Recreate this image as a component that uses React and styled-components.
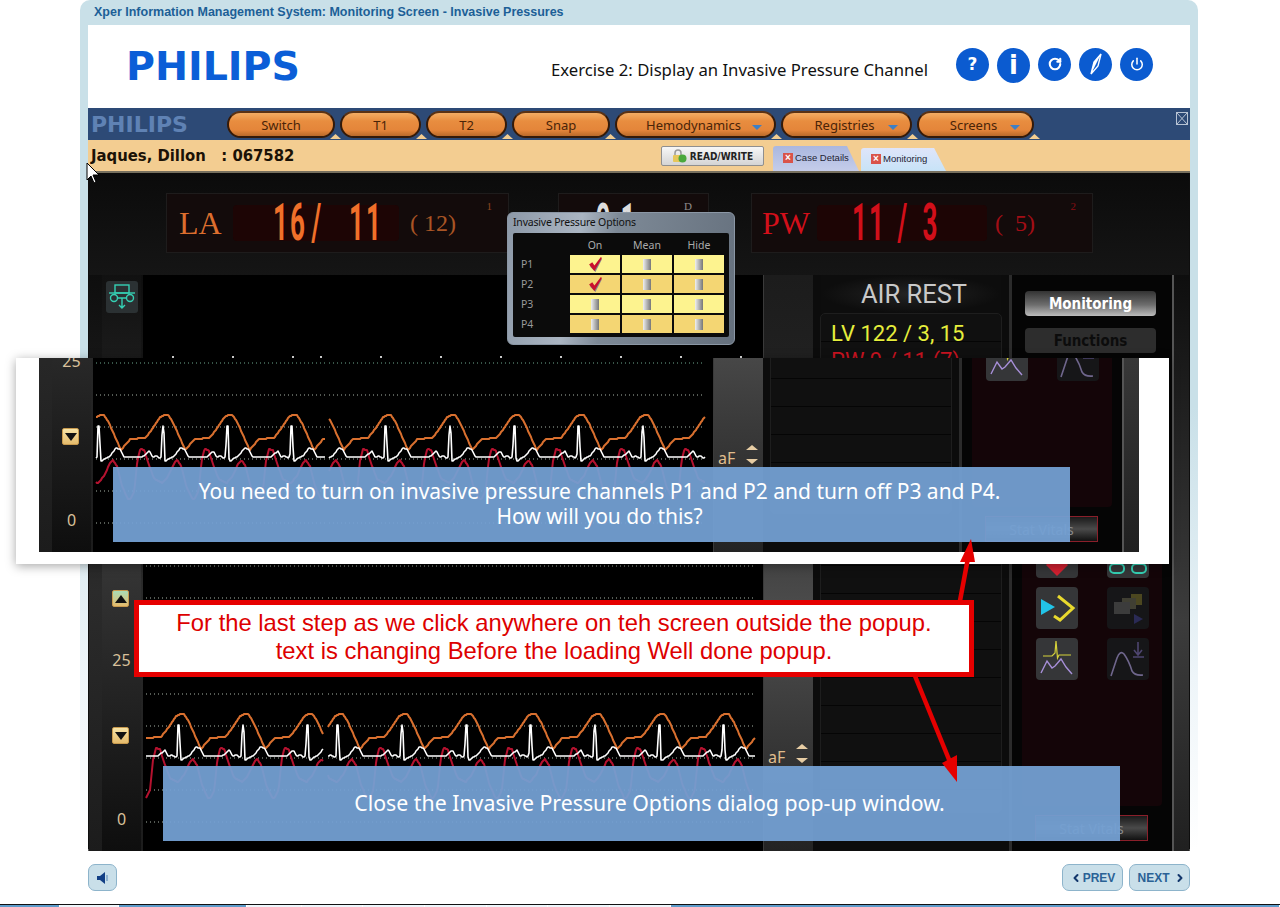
import React from 'react';
import styled, { createGlobalStyle } from 'styled-components';
import { ChevronLeft, ChevronRight, Power, RotateCw } from 'lucide-react';

const GlobalStyle = createGlobalStyle`
  html, body { margin: 0; padding: 0; background: #fff; }
  body { font-family: "Liberation Sans", Arial, sans-serif; }
  * { box-sizing: border-box; }
`;

const CHART_TOP = 275;
const CHART_LEFT = 143;
const PERIOD = 64.3;

// waveform shapes, keyed on distance from the R peak
const ORANGE = [[-32, 738], [-17, 737], [-10, 728], [-2, 716], [2, 714], [6, 714], [11, 722], [23, 749], [32.3, 738]];
const WHITE = [[-32, 756], [-20, 756], [-13, 750], [-10, 756], [-6, 755], [-3, 757], [-1, 756], [0, 725], [1.5, 725], [2.5, 760], [4, 760], [6, 758], [12, 755], [18, 747], [22, 748], [26, 756], [32.3, 756]];
const RED = [[-32, 798], [-28, 790], [-25, 760], [-22, 748], [-18, 749], [-14, 762], [-8, 778], [0, 782], [6, 775], [12, 762], [15, 759], [19, 765], [24, 785], [30, 798], [32.3, 798]];

const sampleWave = (shape, t) => {
  for (let i = 0; i < shape.length - 1; i++) {
    const [t0, y0] = shape[i];
    const [t1, y1] = shape[i + 1];
    if (t >= t0 && t <= t1) return y0 + ((y1 - y0) * (t - t0)) / (t1 - t0);
  }
  return shape[0][1];
};

const wavePoints = (shape, { from, to, firstPeak }) => {
  const pts = [];
  for (let x = from; x <= to; x++) {
    let t = (x - firstPeak) % PERIOD;
    if (t > 32.15) t -= PERIOD;
    if (t < -32.15) t += PERIOD;
    pts.push(`${x - CHART_LEFT},${Math.round(sampleWave(shape, t)) - CHART_TOP}`);
  }
  return pts.join(' ');
};

const MAIN_TRACES = [
  { from: 146, to: 323, firstPeak: 178 },
  { from: 328, to: 755, firstPeak: 337 },
];
const ZOOMED_TRACES = [
  { from: 146, to: 375, firstPeak: 148 },
  { from: 379, to: 755, firstPeak: 435 },
];
const GRID_ROWS = [566, 598, 630, 662, 694, 726, 758, 790, 822];
const TICKS = [172, 232, 292, 320, 380, 440, 500, 560, 620, 680, 740];

const Page = styled.div`
  position: relative;
  width: 1280px;
  height: 907px;
  overflow: hidden;
  background: #fff;
`;

const Shell = styled.div`
  width: 1118px;
  height: 904px;
  margin-left: 80px;
  padding: 0 8px;
  border-radius: 10px 10px 0 0;
  background: linear-gradient(#c9e0e8 0, #c9e0e8 45%, #eef5f9 75%, #fff 94%);
`;

const TitleBar = styled.div`
  height: 25px;
  padding: 5px 0 0 6px;
  font: bold 12.5px "Liberation Sans", Arial, sans-serif;
  color: #1c5f97;
`;

const Header = styled.div`
  display: flex;
  align-items: center;
  height: 83px;
  padding: 0 37px 0 38px;
  background: #fff;
`;

const Logo = styled.div`
  font: bold 39.5px "DejaVu Sans", sans-serif;
  color: #0b5ed7;
  line-height: 1;
`;

const ExerciseTitle = styled.div`
  margin-left: auto;
  margin-right: 28px;
  margin-top: 6px;
  font: 16.7px "Noto Sans", sans-serif;
  color: #111;
`;

const RoundButtons = styled.div`
  display: flex;
  gap: 8px;
  margin-top: -3px;
`;

const RoundButton = styled.div`
  display: flex;
  align-items: center;
  justify-content: center;
  width: 33px;
  height: ${(props) => (props.$tall ? 35 : 33)}px;
  border-radius: 50%;
  background: #0b5bd0;
  color: #fff;
  font: bold ${(props) => (props.$tall ? 26 : 17)}px "DejaVu Sans", sans-serif;
`;

const NavBar = styled.div`
  display: flex;
  align-items: center;
  position: relative;
  height: 32px;
  background: #2d4a76;
`;

const NavBrand = styled.div`
  width: 139px;
  padding-left: 3px;
  font: bold 22px "DejaVu Sans", sans-serif;
  color: #5f82b4;
`;

const NavPills = styled.div`
  display: flex;
  gap: 5px;
  margin-top: 1px;
`;

const NavPill = styled.div`
  position: relative;
  display: flex;
  align-items: center;
  justify-content: center;
  width: ${(props) => props.$width}px;
  height: 27px;
  padding-right: ${(props) => (props.$menu ? 4 : 0)}px;
  border: 2px solid #351a08;
  border-top-color: #5a3214;
  border-radius: 14px;
  background: linear-gradient(#f3ad64 0, #e88d3f 35%, #e4853a 75%, #b96a2a 100%);
  font: 13px "Noto Sans", sans-serif;
  color: #4a2408;
  &::after {
    content: '';
    position: absolute;
    right: -8px;
    bottom: -3px;
    width: 11px;
    height: 5px;
    background: #f3cd91;
    clip-path: polygon(50% 0, 100% 100%, 0 100%);
  }
`;

const NavArrow = styled.span`
  position: absolute;
  right: 12px;
  top: 12px;
  width: 0;
  height: 0;
  border-left: 5px solid transparent;
  border-right: 5px solid transparent;
  border-top: 5px solid #3f7fc4;
`;

const WindowClose = styled.div`
  position: absolute;
  right: 2px;
  top: 4px;
  display: flex;
  color: #b7c3d4;
`;

const PatientBar = styled.div`
  display: flex;
  align-items: flex-end;
  height: 33px;
  padding: 0 0 0 3px;
  background: #f3cd91;
  border-bottom: 2px solid #77705f;
`;

const PatientName = styled.div`
  width: 570px;
  margin-bottom: 6px;
  font: bold 16.5px "DejaVu Sans Condensed", "DejaVu Sans", sans-serif;
  white-space: pre;
  color: #1b1206;
`;

const ReadWrite = styled.div`
  display: flex;
  align-items: center;
  justify-content: center;
  gap: 3px;
  width: 103px;
  height: 20px;
  margin-bottom: 5px;
  border: 1px solid #8f8f8f;
  border-radius: 2px;
  background: linear-gradient(#f7f7f7, #d4d4d4);
  font: bold 10px "DejaVu Sans Condensed", "DejaVu Sans", sans-serif;
  color: #222;
`;

const Tab = styled.div`
  display: flex;
  align-items: center;
  gap: 2px;
  width: ${(props) => props.$width}px;
  height: ${(props) => props.$height}px;
  margin-left: ${(props) => props.$gap}px;
  padding: 0 0 2px 10px;
  border-radius: 3px 6px 0 0;
  clip-path: polygon(0 0, 86% 0, 100% 100%, 0 100%);
  background: ${(props) => props.$background};
  font: 9.5px "Liberation Sans", sans-serif;
  color: #223;
`;

const TabClose = styled.span`
  display: flex;
  align-items: center;
  justify-content: center;
  width: 10px;
  height: 10px;
  background: #d9534a;
  color: #fff;
  font: bold 10px "Liberation Sans", sans-serif;
`;

const Monitor = styled.div`
  height: 678px;
  padding: 0 1px;
  background: #0e0e0e;
  border-bottom: 2px solid #555;
`;

const VitalsRow = styled.div`
  display: flex;
  height: 102px;
  padding: 20px 0 0 77px;
  background: linear-gradient(#0b0b0b, #151515);
`;

const VitalPanel = styled.div`
  position: relative;
  display: flex;
  align-items: center;
  width: ${(props) => props.$width}px;
  height: 60px;
  margin-right: ${(props) => props.$gap || 0}px;
  padding-left: ${(props) => props.$pad}px;
  background: #130b0b;
  border: 1px solid #1e1c1c;
  color: ${(props) => props.$color};
`;

const VitalLabel = styled.div`
  width: ${(props) => props.$width}px;
  font: 32px "Liberation Serif", serif;
`;

const DigitStrip = styled.div`
  display: flex;
  align-items: center;
  width: ${(props) => props.$width}px;
  height: 36px;
  padding-left: ${(props) => props.$pad}px;
  border-radius: 4px;
  background: #1d0505;
`;

const Digits = styled.span`
  display: inline-block;
  width: ${(props) => props.$width}px;
  margin-right: ${(props) => props.$gap || 0}px;
  text-align: center;
  font: 700 52px Roboto, sans-serif;
  line-height: 36px;
  letter-spacing: 4px;
  white-space: nowrap;
  transform: scaleX(0.5);
  color: ${(props) => props.$color || 'inherit'};
`;

const VitalMean = styled.div`
  margin-left: ${(props) => props.$gap}px;
  font: 24px "Liberation Serif", serif;
  white-space: pre;
  opacity: 0.75;
`;

const VitalIndex = styled.span`
  position: absolute;
  right: 16px;
  top: 6px;
  font: 11px "Liberation Serif", serif;
  opacity: 0.6;
`;

const Deck = styled.div`
  display: flex;
  width: 1100px;
  height: 576px;
  background: #000;
  margin-top: ${(props) => props.$offset || 0}px;
`;

const Rail = styled.div`
  position: relative;
  display: flex;
  flex-direction: column;
  align-items: center;
  width: 54px;
  border-left: 13px solid;
  border-image: linear-gradient(#0e0e0e, #2b2b2b 55%, #1c1c1c) 1;
  border-right: 2px solid #4c4c4c;
  background: linear-gradient(#111 0, #1b1b1b 15%, #353535 50%, #0e0e0e 100%);
`;

const RailIcon = styled.div`
  width: 32px;
  height: 32px;
  margin-top: 6px;
  border-radius: 3px;
  background: #2b3133;
  display: flex;
`;

const ScaleButton = styled.div`
  position: absolute;
  left: 10px;
  top: ${(props) => props.$top}px;
  display: flex;
  align-items: center;
  justify-content: center;
  width: 17px;
  height: 17px;
  border-radius: 2px;
  background: linear-gradient(${(props) => props.$shade}, #e5bb6c);
  border: 1px solid #c89a4e;
`;

const ScaleTriangle = styled.span`
  width: 0;
  height: 0;
  border-left: 6px solid transparent;
  border-right: 6px solid transparent;
  ${(props) => (props.$up ? 'border-bottom: 8px solid #111;' : 'border-top: 8px solid #111;')}
`;

const ScaleValue = styled.span`
  position: absolute;
  left: 0;
  width: 39px;
  top: ${(props) => props.$top}px;
  text-align: center;
  font: 16px "Noto Sans", sans-serif;
  color: #d9c19b;
`;

const ChartPane = styled.div`
  width: 620px;
  background: #000;
  display: flex;
`;

const ScaleColumn = styled.div`
  position: relative;
  width: 50px;
  border-left: 1px solid #3a3a3a;
  background: linear-gradient(#1c1c1c 0, #222 20%, #4e4e4e 60%, #3d3d3d 75%, #232323 100%);
`;

const GainLabel = styled.span`
  position: absolute;
  left: 4px;
  top: 471px;
  font: 16px "Noto Sans", sans-serif;
  color: #e0bd8d;
`;

const GainArrows = styled.div`
  position: absolute;
  left: 32px;
  top: 469px;
  display: flex;
  flex-direction: column;
  gap: 9px;
`;

const GainArrow = styled.span`
  width: 0;
  height: 0;
  border-left: 6px solid transparent;
  border-right: 6px solid transparent;
  ${(props) => (props.$up ? 'border-bottom: 5px solid #e7cda4;' : 'border-top: 5px solid #e7cda4;')}
`;

const ReadoutColumn = styled.div`
  width: 199px;
  padding: 0 8px;
  border-right: 3px solid #2b2b2b;
  background: #0c0c0c;
`;

const ProcedureName = styled.div`
  height: 38px;
  padding-left: 6px;
  text-align: center;
  font: 25.5px/38px Roboto, sans-serif;
  color: #c9c9c9;
  background: radial-gradient(ellipse at center, #242424, #0d0d0d 70%);
  visibility: ${(props) => (props.$hidden ? 'hidden' : 'visible')};
`;

const ReadoutBox = styled.div`
  height: 500px;
  margin: 0 -1px;
  padding: 6px 10px;
  border: 1px solid #1e1e1e;
  border-radius: 5px;
  background: repeating-linear-gradient(#101010 0, #101010 27px, #050505 27px, #050505 28px);
`;

const ReadoutLine = styled.div`
  font: 22px/27px Roboto, sans-serif;
  color: ${(props) => props.$color};
  visibility: ${(props) => (props.$hidden ? 'hidden' : 'visible')};
`;

const ControlsColumn = styled.div`
  display: flex;
  flex-direction: column;
  width: 160px;
  padding: 16px 10px 0;
  background: #050505;
`;

const ModeButton = styled.div`
  display: flex;
  align-items: center;
  justify-content: center;
  height: 25px;
  margin: 0 6px 12px 3px;
  border-radius: 4px;
  font: bold 15px "DejaVu Sans Condensed", "DejaVu Sans", sans-serif;
  color: ${(props) => (props.$active ? '#fff' : '#0c0c0c')};
  background: ${(props) => (props.$active ? 'linear-gradient(#333, #6d6d6d 55%, #bcbcbc)' : '#2d2d2d')};
  visibility: ${(props) => (props.$hidden ? 'hidden' : 'visible')};
`;

const ToolPanel = styled.div`
  display: grid;
  grid-template-columns: 42px 42px;
  grid-auto-rows: 42px;
  justify-content: space-between;
  align-content: start;
  height: 447px;
  padding: 177px 13px 0 14px;
  margin-top: -6px;
  border-radius: 0 0 4px 4px;
  row-gap: 9px;
  background: #140508;
`;

const ToolTile = styled.div`
  display: flex;
  border-radius: 4px;
  background: ${(props) => (props.$dim ? '#161618' : '#353638')};
`;

const StatVitals = styled.div`
  display: flex;
  align-items: center;
  justify-content: center;
  width: 113px;
  height: 26px;
  margin: 9px 0 0 13px;
  border: 1px solid #8a1f2a;
  background: linear-gradient(#1a1a1a, #4a4a4a 50%, #111);
  font: 14px "Noto Sans", sans-serif;
  color: #8a8a8a;
`;

const EdgeColumn = styled.div`
  width: 17px;
  border-left: 2px solid #555;
  background: linear-gradient(#0e0e0e, #3c3c3c 60%, #202020);
`;

const Footer = styled.div`
  display: flex;
  align-items: flex-start;
  gap: 6px;
  height: 53px;
  padding-top: 13px;
`;

const FooterButton = styled.div`
  display: flex;
  align-items: center;
  justify-content: center;
  gap: ${(props) => props.$gap || 0}px;
  width: ${(props) => props.$width}px;
  height: 27px;
  margin-right: ${(props) => (props.$push ? 'auto' : 0)};
  padding-left: ${(props) => props.$shift || 0}px;
  border: 1px solid #8db4cb;
  border-radius: 7px;
  background: #c9dfe9;
  font: bold 12px "Liberation Sans", sans-serif;
  color: #2a6296;
`;

const Taskbar = styled.div`
  display: flex;
  height: 3px;
  border-top: 1px solid #111;
`;

const TaskSegment = styled.div`
  width: ${(props) => props.$width}px;
  flex: ${(props) => (props.$fill ? 1 : 'none')};
  margin-right: 1px;
  background: ${(props) => (props.$open ? '#eef6fb' : '#5d9ccb')};
`;

// Invasive Pressure Options dialog
const Dialog = styled.div`
  position: absolute;
  left: 507px;
  top: 212px;
  width: 228px;
  height: 133px;
  padding: 20px 5px 7px;
  border: 1px solid #8b97a5;
  border-radius: 6px;
  background: linear-gradient(100deg, #8d99a8 0, #aab5c2 30%, #7d8996 45%, #65707d 100%);
`;

const DialogTitle = styled.div`
  position: absolute;
  left: 5px;
  top: 2px;
  font: 10.5px "Noto Sans", sans-serif;
  letter-spacing: -0.2px;
  color: #111;
`;

const OptionsGrid = styled.div`
  display: grid;
  grid-template-columns: 54px 50px 50px 50px;
  grid-template-rows: 17px repeat(4, 18px);
  gap: 2px;
  height: 104px;
  padding: 3px 5px 0 1px;
  border-radius: 2px;
  background: #0b0b0b;
`;

const OptionsHead = styled.div`
  display: flex;
  align-items: center;
  justify-content: center;
  font: 10.5px "Noto Sans", sans-serif;
  color: #aaa;
`;

const OptionsRow = styled.div`
  display: flex;
  align-items: center;
  padding-left: 7px;
  font: 10.5px "Noto Sans", sans-serif;
  color: #999;
`;

const OptionCell = styled.div`
  display: flex;
  align-items: center;
  justify-content: center;
  background: ${(props) => (props.$stripe ? '#f4d673' : '#fdf38f')};
`;

const OffMark = styled.span`
  width: 8px;
  height: 11px;
  background: linear-gradient(90deg, #f0f0f0, #777);
`;

// tutorial overlays
const ZoomPanel = styled.div`
  position: absolute;
  left: 16px;
  top: 358px;
  width: 1153px;
  height: 206px;
  padding-left: 23px;
  background: #fff;
  box-shadow: 0 2px 10px rgba(0, 0, 0, 0.35);
`;

const ZoomWindow = styled.div`
  width: 1100px;
  height: 194px;
  overflow: hidden;
`;

const Caption = styled.div`
  position: absolute;
  left: ${(props) => props.$left}px;
  top: ${(props) => props.$top}px;
  display: flex;
  align-items: center;
  justify-content: center;
  width: 957px;
  height: 75px;
  padding: 0 0 2px 16px;
  text-align: center;
  background: rgba(116, 160, 211, 0.94);
  font: ${(props) => props.$size}px/25px "Noto Sans", sans-serif;
  color: #fff;
`;

const Callout = styled.div`
  position: absolute;
  left: 134px;
  top: 600px;
  width: 840px;
  height: 77px;
  padding-top: 4px;
  border: 5px solid #e60000;
  background: #fff;
  text-align: center;
  font: 23.8px/28px "Liberation Sans", Arial, sans-serif;
  color: #dd0000;
`;

const ArrowLayer = styled.svg`
  position: absolute;
  left: 0;
  top: 0;
  pointer-events: none;
`;

const ChartDrawing = ({ traces }) => (
  <svg width="620" height="576" viewBox="0 0 620 576">
    {TICKS.map((x) => (
      <rect key={`t-${x}`} x={x - CHART_LEFT} y={81} width="2" height="2" fill="#ddd" />
    ))}
    {GRID_ROWS.map((y, i) => (
      <g key={y}>
        <line x1={3} x2={traces[0].to - CHART_LEFT} y1={y - CHART_TOP} y2={y - CHART_TOP} stroke={i === 3 ? '#6fa88f' : '#a8b4a8'} strokeWidth="1" strokeDasharray="1 3" />
        <line x1={traces[1].from - CHART_LEFT} x2={612} y1={y - CHART_TOP} y2={y - CHART_TOP} stroke={i === 3 ? '#6fa88f' : '#a8b4a8'} strokeWidth="1" strokeDasharray="1 3" />
      </g>
    ))}
    {traces.map((t) => (
      <g key={t.from} fill="none" strokeLinejoin="round">
        <polyline points={wavePoints(RED, t)} stroke="#b5122f" strokeWidth="2" />
        <polyline points={wavePoints(ORANGE, t)} stroke="#d9702f" strokeWidth="2" />
        <polyline points={wavePoints(WHITE, t)} stroke="#fff" strokeWidth="1.6" />
      </g>
    ))}
  </svg>
);

const ToolIcon = ({ name }) => {
  if (name === 'alarm') {
    return (
      <svg width="42" height="42" viewBox="0 0 42 42">
        <path d="M21 40 L10 29 L21 18 L32 29 Z" fill="#d02030" />
      </svg>
    );
  }
  if (name === 'link') {
    return (
      <svg width="42" height="42" viewBox="0 0 42 42" fill="none" stroke="#35d0b4" strokeWidth="2">
        <rect x="3" y="28" width="14" height="9" rx="4" />
        <rect x="25" y="28" width="14" height="9" rx="4" />
        <path d="M12 18 h18" />
      </svg>
    );
  }
  if (name === 'route') {
    return (
      <svg width="42" height="42" viewBox="0 0 42 42">
        <path d="M5 12 L19 20 L5 28 Z" fill="#22c4e8" />
        <path d="M22 9 L37 21 L24 33 L18 29" fill="none" stroke="#e8d92e" strokeWidth="3" />
      </svg>
    );
  }
  if (name === 'stack') {
    return (
      <svg width="42" height="42" viewBox="0 0 42 42">
        <rect x="24" y="7" width="11" height="11" fill="#4c4720" />
        <rect x="15" y="11" width="14" height="11" fill="#403f33" />
        <rect x="7" y="15" width="16" height="12" fill="#3c3c3c" />
        <path d="M27 27 L36 32 L27 37 Z" fill="#2a2a55" />
      </svg>
    );
  }
  if (name === 'waves') {
    return (
      <svg width="42" height="42" viewBox="0 0 42 42" fill="none">
        <path d="M7 18 H16 L19 15 L20 3 L21.5 20 L23 17 H35" stroke="#d6d23a" strokeWidth="1.2" />
        <path d="M5 35 L11 23 L16 30 L19 28 L25 21 L30 29 L36 36" stroke="#a78fd8" strokeWidth="1.4" />
      </svg>
    );
  }
  return (
    <svg width="42" height="42" viewBox="0 0 42 42" fill="none">
      <path d="M4 38 L10 20 Q13 12 17 16 Q22 23 25 33 Q28 38 36 37" stroke="#6f668c" strokeWidth="1.6" />
      <path d="M31 4 V16 M27 12 L31 17 L35 12 M26 19 H37" stroke="#4e4570" strokeWidth="1.6" />
    </svg>
  );
};

// cropped is the copy inside the zoom panel, where only the lower part shows
const MonitorDeck = ({ traces, offset, cropped }) => (
  <Deck $offset={offset}>
    <Rail>
      <RailIcon>
        <svg width="32" height="32" viewBox="0 0 32 32" fill="none" stroke="#35d0b4" strokeWidth="1.4">
          <rect x="9" y="4" width="14" height="8" />
          <path d="M3 12 H29" />
          <circle cx="8" cy="17" r="3.5" />
          <circle cx="24" cy="17" r="3.5" />
          <path d="M11.5 17 H20.5 M16 17 V27 M13 24 L16 27 L19 24" />
        </svg>
      </RailIcon>
      <ScaleButton $top={315} $shade="#a9dcb6"><ScaleTriangle $up /></ScaleButton>
      <ScaleValue $top={374}>25</ScaleValue>
      <ScaleButton $top={452} $shade="#f7e3a6"><ScaleTriangle /></ScaleButton>
      <ScaleValue $top={533}>0</ScaleValue>
    </Rail>
    <ChartPane>
      <ChartDrawing traces={traces} />
    </ChartPane>
    <ScaleColumn>
      <GainLabel>aF</GainLabel>
      <GainArrows>
        <GainArrow $up />
        <GainArrow />
      </GainArrows>
    </ScaleColumn>
    <ReadoutColumn>
      <ProcedureName $hidden={cropped}>AIR REST</ProcedureName>
      <ReadoutBox>
        <ReadoutLine $hidden={cropped} $color="#e6ee3c">LV 122 / 3, 15</ReadoutLine>
        <ReadoutLine $hidden={cropped} $color="#c91320">PW 9 / 11 (7)</ReadoutLine>
      </ReadoutBox>
    </ReadoutColumn>
    <ControlsColumn>
      <ModeButton $hidden={cropped} $active>Monitoring</ModeButton>
      <ModeButton $hidden={cropped}>Functions</ModeButton>
      <ToolPanel>
        <ToolTile><ToolIcon name="alarm" /></ToolTile>
        <ToolTile><ToolIcon name="link" /></ToolTile>
        <ToolTile><ToolIcon name="route" /></ToolTile>
        <ToolTile $dim><ToolIcon name="stack" /></ToolTile>
        <ToolTile><ToolIcon name="waves" /></ToolTile>
        <ToolTile $dim><ToolIcon name="curve" /></ToolTile>
      </ToolPanel>
      <StatVitals>Stat Vitals</StatVitals>
    </ControlsColumn>
    <EdgeColumn />
  </Deck>
);

const CheckMark = () => (
  <svg width="15" height="15" viewBox="0 0 14 14">
    <path d="M2 9 L4 6 L6 9 L12 1 L13 2 L8 12 L7 14 L6 13 Z" fill="#888" />
    <path d="M1 7 L4 5 L6 8 L12 0 L13 1 L6 13 Z" fill="#c8102e" />
  </svg>
);

const OPTION_ROWS = [
  { name: 'P1', on: true },
  { name: 'P2', on: true },
  { name: 'P3', on: false },
  { name: 'P4', on: false },
];

const NAV_ITEMS = [
  { label: 'Switch', width: 108 },
  { label: 'T1', width: 81 },
  { label: 'T2', width: 81 },
  { label: 'Snap', width: 98 },
  { label: 'Hemodynamics', width: 161, menu: true },
  { label: 'Registries', width: 131, menu: true },
  { label: 'Screens', width: 117, menu: true },
];

const TASK_SEGMENTS = [
  { width: 59 }, { width: 58, open: true }, { width: 127 }, { width: 54, open: true },
  { width: 60, open: true }, { width: 61, open: true }, { width: 61, open: true },
  { width: 60, open: true }, { width: 61, open: true }, { width: 60, open: true },
];

const App = () => (
  <Page>
    <GlobalStyle />
    <Shell>
      <TitleBar>Xper Information Management System: Monitoring Screen - Invasive Pressures</TitleBar>
      <Header>
        <Logo>PHILIPS</Logo>
        <ExerciseTitle>Exercise 2: Display an Invasive Pressure Channel</ExerciseTitle>
        <RoundButtons>
          <RoundButton>?</RoundButton>
          <RoundButton $tall>i</RoundButton>
          <RoundButton><RotateCw size={14} strokeWidth={3.6} /></RoundButton>
          <RoundButton>
            <svg width="20" height="24" viewBox="0 0 20 24">
              <path d="M15 2 L12 14 L5 22 L8 10 Z" fill="none" stroke="#fff" strokeWidth="1.4" />
              <path d="M15 2 L8 10 L5 22 Z" fill="#fff" />
            </svg>
          </RoundButton>
          <RoundButton><Power size={14} strokeWidth={2.6} /></RoundButton>
        </RoundButtons>
      </Header>
      <NavBar>
        <NavBrand>PHILIPS</NavBrand>
        <NavPills>
          {NAV_ITEMS.map((item) => (
            <NavPill key={item.label} $width={item.width} $menu={item.menu}>
              {item.label}
              {item.menu && <NavArrow />}
            </NavPill>
          ))}
        </NavPills>
        <WindowClose>
          <svg width="12" height="13" viewBox="0 0 12 13" fill="none" stroke="currentColor">
            <rect x="0.5" y="0.5" width="11" height="12" />
            <path d="M1 1 L11 12 M11 1 L1 12" />
          </svg>
        </WindowClose>
      </NavBar>
      <PatientBar>
        <PatientName>{'Jaques, Dillon   : 067582'}</PatientName>
        <ReadWrite>
          <svg width="15" height="14" viewBox="0 0 15 14">
            <path d="M3 6 V4 a3 3 0 0 1 6 0 V6" fill="none" stroke="#999" strokeWidth="1.5" />
            <rect x="1" y="6" width="10" height="7" rx="1" fill="#e6c65a" />
            <circle cx="10.5" cy="9.5" r="4" fill="#4aa83c" />
          </svg>
          READ/WRITE
        </ReadWrite>
        <Tab $width={86} $height={25} $gap={9} $background="linear-gradient(#aab7df, #c5cdea)">
          <TabClose>×</TabClose>Case Details
        </Tab>
        <Tab $width={85} $height={23} $gap={2} $background="linear-gradient(#dfe5fa, #c7e3f7)">
          <TabClose>×</TabClose>Monitoring
        </Tab>
      </PatientBar>
      <Monitor>
        <VitalsRow>
          <VitalPanel $width={343} $gap={49} $pad={12} $color="#dc6e2e">
            <VitalLabel $width={54}>LA</VitalLabel>
            <DigitStrip $width={166} $pad={32}>
              <Digits $width={32} $gap={11} $color="#f0702a">16</Digits>
              <Digits $width={14} $gap={19} $color="#f0702a">/</Digits>
              <Digits $width={32} $color="#f0702a">11</Digits>
            </DigitStrip>
            <VitalMean $gap={11}>( 12)</VitalMean>
            <VitalIndex>1</VitalIndex>
          </VitalPanel>
          <VitalPanel $width={151} $gap={42} $pad={30} $color="#ddd">
            <Digits $width={26} $gap={2}>0</Digits>
            <Digits $width={14}>1</Digits>
            <VitalIndex>D</VitalIndex>
          </VitalPanel>
          <VitalPanel $width={342} $pad={10} $color="#d20f1a">
            <VitalLabel $width={55}>PW</VitalLabel>
            <DigitStrip $width={170} $pad={27}>
              <Digits $width={32} $gap={18}>11</Digits>
              <Digits $width={14} $gap={9}>/</Digits>
              <Digits $width={22}>3</Digits>
            </DigitStrip>
            <VitalMean $gap={8}>(  5)</VitalMean>
            <VitalIndex>2</VitalIndex>
          </VitalPanel>
        </VitalsRow>
        <MonitorDeck traces={MAIN_TRACES} />
      </Monitor>
      <Footer>
        <FooterButton $width={29} $push>
          <svg width="14" height="14" viewBox="0 0 14 14">
            <path d="M1 5 H4 L9 1 V13 L4 9 H1 Z" fill="#123f85" />
            <rect x="10" y="4" width="2" height="6" fill="#8fb2d0" />
          </svg>
        </FooterButton>
        <FooterButton $width={61} $gap={1}><ChevronLeft size={12} strokeWidth={4} color="#12366b" />PREV</FooterButton>
        <FooterButton $width={61} $gap={4} $shift={4}>NEXT<ChevronRight size={12} strokeWidth={4} color="#12366b" /></FooterButton>
      </Footer>
    </Shell>
    <Taskbar>
      {TASK_SEGMENTS.map((seg, i) => (
        <TaskSegment key={i} $width={seg.width} $open={seg.open} />
      ))}
      <TaskSegment $fill />
    </Taskbar>

    <Dialog>
      <DialogTitle>Invasive Pressure Options</DialogTitle>
      <OptionsGrid>
        <OptionsHead />
        <OptionsHead>On</OptionsHead>
        <OptionsHead>Mean</OptionsHead>
        <OptionsHead>Hide</OptionsHead>
        {OPTION_ROWS.map((row, i) => (
          <React.Fragment key={row.name}>
            <OptionsRow>{row.name}</OptionsRow>
            <OptionCell $stripe={i % 2 === 1}>{row.on ? <CheckMark /> : <OffMark />}</OptionCell>
            <OptionCell $stripe={i % 2 === 1}><OffMark /></OptionCell>
            <OptionCell $stripe={i % 2 === 1}><OffMark /></OptionCell>
          </React.Fragment>
        ))}
      </OptionsGrid>
    </Dialog>

    <ZoomPanel>
      <ZoomWindow>
        <MonitorDeck traces={ZOOMED_TRACES} offset={-382} cropped />
      </ZoomWindow>
    </ZoomPanel>
    <Caption $left={113} $top={467} $size={21}>
      <div>You need to turn on invasive pressure channels P1 and P2 and turn off P3 and P4.<br />How will you do this?</div>
    </Caption>
    <Caption $left={163} $top={766} $size={21.3}>Close the Invasive Pressure Options dialog pop-up window.</Caption>
    <ArrowLayer width="1280" height="907" viewBox="0 0 1280 907">
      <path d="M959 606 L968 558" stroke="#e60000" strokeWidth="4.5" fill="none" />
      <path d="M971 539 L960 562 L975 562 Z" fill="#e60000" />
      <path d="M915 676 L950 762" stroke="#e60000" strokeWidth="4.5" fill="none" />
      <path d="M957 782 L942 763 L957 755 Z" fill="#e60000" />
      <path d="M87 163 V180 L91 176 L94 183 L96 182 L93 175 L99 175 Z" fill="#fff" stroke="#000" strokeWidth="1" />
    </ArrowLayer>
    <Callout>
      For the last step as we click anywhere on teh screen outside the popup.<br />
      text is changing Before the loading Well done popup.
    </Callout>
  </Page>
);

export default App;
